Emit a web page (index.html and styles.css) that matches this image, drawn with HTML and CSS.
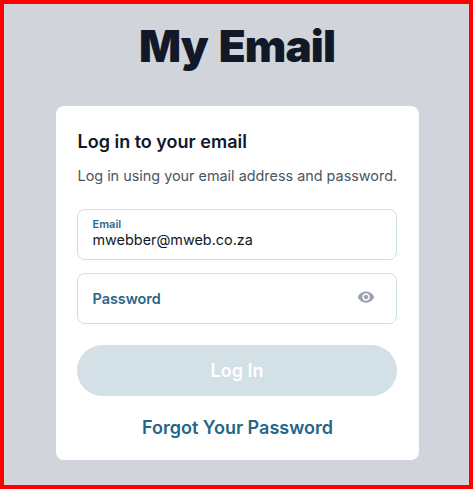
FILE: index.html
```html
<!DOCTYPE html>
<html lang="en">
<head>
    <meta charset="UTF-8">
    <title>My Email</title>
    <link rel="stylesheet" href="styles.css">
</head>
<body>

<div class="page">
    <h1 class="logo">My Email</h1>

    <div class="card">
        <h2 class="card-title">Log in to your email</h2>
        <p class="card-text">Log in using your email address and password.</p>

        <div class="field field-filled">
            <span class="field-label">Email</span>
            <span class="field-value">mwebber@mweb.co.za</span>
        </div>

        <div class="field field-empty">
            <span class="field-placeholder">Password</span>
            <svg class="eye" viewBox="0 0 24 24" width="18" height="18">
                <path d="M12 4.5C7 4.5 2.73 7.61 1 12c1.73 4.39 6 7.5 11 7.5s9.27-3.11 11-7.5c-1.73-4.39-6-7.5-11-7.5zM12 17c-2.76 0-5-2.24-5-5s2.24-5 5-5 5 2.24 5 5-2.24 5-5 5zm0-8c-1.66 0-3 1.34-3 3s1.34 3 3 3 3-1.34 3-3-1.34-3-3-3z"/>
            </svg>
        </div>

        <button class="btn-login">Log In</button>
        <a class="forgot">Forgot Your Password</a>
    </div>
</div>

</body>
</html>
```

FILE: styles.css
```css
html, body { height: 100%; }
body { margin: 0; font-family: Inter, sans-serif; }

.page { box-sizing: border-box; height: 489px; border: 4px solid #ff0000; background: #d1d5db; display: flex; flex-direction: column; align-items: center; padding: 16px 0 0 1px; }

.logo { margin: 0; font-size: 44px; line-height: 52px; font-weight: 900; color: #111827; letter-spacing: -0.9px; word-spacing: 3px; }

/* Carte */
.card { box-sizing: border-box; width: 363px; height: 354px; margin-top: 34px; background: white; border-radius: 8px; padding: 24px 22px 0 21px; }
.card-title { margin: 0 0 0 1px; font-size: 18px; line-height: 24px; font-weight: 600; color: #111827; }
.card-text { margin: 11px 0 0 1px; font-size: 14.4px; line-height: 22px; color: #4b5563; white-space: nowrap; }

/* Champs */
.field { box-sizing: border-box; width: 320px; height: 51px; border: 1px solid #d0e0e8; border-radius: 8px; padding: 0 15px; display: flex; }
.field-filled { flex-direction: column; justify-content: center; margin-top: 22px; }
.field-empty { align-items: center; justify-content: space-between; margin-top: 13px; }
.field-label { font-size: 11px; line-height: 13px; font-weight: 600; color: #2b6a8a; margin-top: -2px; }
.field-value { font-size: 14.4px; line-height: 20px; color: #111827; margin-top: -1px; }
.field-placeholder { font-size: 14.4px; font-weight: 600; color: #2b6685; }
.eye { fill: #9ca3af; margin-right: 6px; margin-top: -3px; }

/* Bouton */
.btn-login { display: block; width: 320px; height: 51px; margin-top: 21px; padding: 0 0 0 1px; border: none; border-radius: 26px; background: #d3e0e6; color: white; font-family: Inter, sans-serif; font-size: 18px; font-weight: 600; }
.forgot { display: block; width: 322px; margin-top: 20px; text-align: center; font-size: 18px; line-height: 24px; font-weight: 600; color: #246688; }
```
